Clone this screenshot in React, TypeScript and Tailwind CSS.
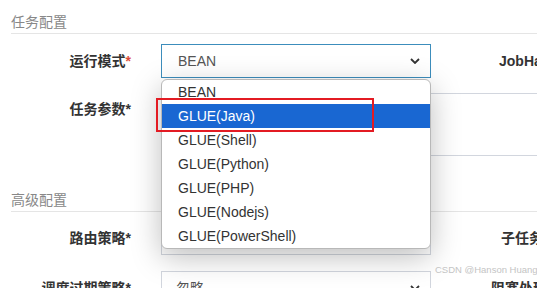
import React from 'react';

const FONT = { fontFamily: '"Liberation Sans", "Noto Sans CJK SC", sans-serif' };

const options = [
  'BEAN',
  'GLUE(Java)',
  'GLUE(Shell)',
  'GLUE(Python)',
  'GLUE(PHP)',
  'GLUE(Nodejs)',
  'GLUE(PowerShell)',
];

function Chevron() {
  return (
    <svg width="10" height="6" viewBox="0 0 10 6" className="shrink-0">
      <polyline points="1,1 5,5 9,1" fill="none" stroke="#333" strokeWidth="1.8" />
    </svg>
  );
}

function Select({ value, focused }: { value: string; focused?: boolean }) {
  return (
    <div
      className={`ml-[30px] flex h-[34px] w-[270px] shrink-0 items-center justify-between border pl-[16px] pr-[10px] text-[14px] text-[#555] ${
        focused ? 'border-[#3c8dbc]' : 'border-[#d2d6de]'
      }`}
    >
      <span>{value}</span>
      <Chevron />
    </div>
  );
}

function Label({ text, required }: { text: string; required?: boolean }) {
  return (
    <div className="w-[131px] shrink-0 text-right text-[14px] font-bold leading-[20px] text-[#333]">
      {text}
      <span className={required ? 'text-[#dd4b39]' : ''}>*</span>
    </div>
  );
}

function SectionTitle({ text }: { text: string }) {
  return (
    <div className="ml-[11px] border-b border-[#e5e5e5] pb-[1px] text-[14px] leading-[20px] text-[#888]">
      {text}
    </div>
  );
}

export default function App() {
  return (
    <div className="relative h-[288px] w-[537px] overflow-hidden bg-white" style={FONT}>
      <div className="pt-[12px]">
        <SectionTitle text="任务配置" />

        {/* 运行模式 */}
        <div className="mt-[10px] flex items-center">
          <Label text="运行模式" required />
          <Select value="BEAN" focused />
          <div className="ml-[68px] whitespace-nowrap text-[14px] font-bold text-[#333]">JobHandler*</div>
        </div>

        {/* 任务参数 */}
        <div className="mt-[15px] flex items-start">
          <div className="pt-[6px]">
            <Label text="任务参数" />
          </div>
          <div className="ml-[30px] h-[63px] w-[420px] shrink-0 border border-[#d2d6de]" />
        </div>

        <div className="mt-[34px]">
          <SectionTitle text="高级配置" />
        </div>

        {/* 路由策略 (value hidden under the open list) */}
        <div className="mt-[9px] flex items-center">
          <Label text="路由策略" />
          <Select value="" />
          <div className="ml-[70px] whitespace-nowrap text-[14px] font-bold text-[#333]">子任务ID*</div>
        </div>

        {/* 调度过期策略 */}
        <div className="mt-[16px] flex items-center">
          <Label text="调度过期策略" />
          <div className="ml-[30px] flex h-[34px] w-[270px] shrink-0 items-center justify-between border border-[#d2d6de] pl-[14px] pr-[10px] text-[14px] text-[#555]">
            <span>忽略</span>
            <Chevron />
          </div>
          <div className="ml-[60px] whitespace-nowrap text-[14px] font-bold text-[#333]">阻塞处理策略*</div>
        </div>
      </div>

      {/* open dropdown list */}
      <div className="absolute left-[161px] top-[79px] w-[270px] overflow-hidden rounded-[6px] border border-[#b8b8b8] bg-white shadow-[0_8px_30px_rgba(0,0,0,0.26)]">
        {options.map((o, i) => (
          <div
            key={o}
            className={`flex h-[24px] items-center pl-[16px] text-[14px] ${
              i === 1 ? 'bg-[#1967d2] text-white' : 'text-[#333]'
            }`}
          >
            {o}
          </div>
        ))}
      </div>

      {/* red annotation box */}
      <div className="absolute left-[156px] top-[98px] h-[34px] w-[218px] border-2 border-[#e31b23]" />

      {/* watermark */}
      <div className="absolute left-[435px] top-[263px] whitespace-nowrap text-[9.5px] text-[#c4c4c4]">
        CSDN @Hanson Huang
      </div>
    </div>
  );
}
